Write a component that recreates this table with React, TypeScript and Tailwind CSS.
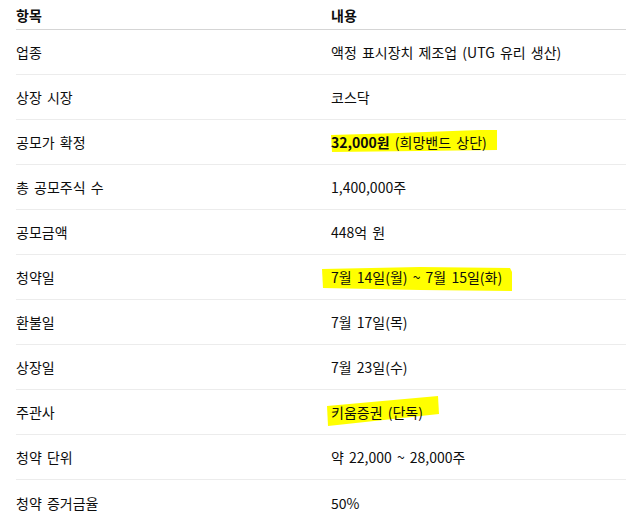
import React from "react";

type Row = { k: string; v: React.ReactNode };

function HL({ children, svgClass, points }: { children: React.ReactNode; svgClass: string; points: string }) {
  return (
    <span className="relative inline-block">
      <svg className={"absolute pointer-events-none " + svgClass} preserveAspectRatio="none">
        <polygon points={points} fill="#ffff00" />
      </svg>
      <span className="relative">{children}</span>
    </span>
  );
}

const rows: Row[] = [
  { k: "업종", v: "액정 표시장치 제조업 (UTG 유리 생산)" },
  { k: "상장 시장", v: "코스닥" },
  {
    k: "공모가 확정",
    v: (
      <HL svgClass="left-[-2px] top-[-4px] w-[170px] h-[26px]" points="2,7 70,5 150,2 168,2 168,22 90,23 3,24">
        <b className="font-bold">32,000원</b> (희망밴드 상단)
      </HL>
    ),
  },
  { k: "총 공모주식 수", v: "1,400,000주" },
  { k: "공모금액", v: "448억 원" },
  {
    k: "청약일",
    v: (
      <HL svgClass="left-[-11px] top-[-3px] w-[195px] h-[30px]" points="2,5 100,3 190,4 192,8 192,27 100,26 3,24">
        7월 14일(월) ~ 7월 15일(화)
      </HL>
    ),
  },
  { k: "환불일", v: "7월 17일(목)" },
  { k: "상장일", v: "7월 23일(수)" },
  {
    k: "주관사",
    v: (
      <HL svgClass="left-[-6px] top-[-8px] w-[117px] h-[34px]" points="2,12 113,2 114,20 3,32">
        키움증권 (단독)
      </HL>
    ),
  },
  { k: "청약 단위", v: "약 22,000 ~ 28,000주" },
  { k: "청약 증거금율", v: "50%" },
];

export default function App() {
  return (
    <div
      className="w-[626px] h-[532px] bg-white pl-4 overflow-hidden text-[14px] leading-5 text-[#0d0d0d] [word-spacing:2px]"
      style={{ fontFamily: '"Noto Sans CJK KR", "Noto Sans", sans-serif' }}
    >
      <div className="flex h-[30px] items-center border-b border-[#d5d5d5] font-bold">
        <div className="w-[315px]">항목</div>
        <div>내용</div>
      </div>
      {rows.map((r, i) => (
        <div
          key={i}
          className={
            i === rows.length - 1
              ? "flex h-[45px] items-center"
              : "flex h-[45px] items-center border-b border-[#ececec]"
          }
        >
          <div className="w-[315px]">{r.k}</div>
          <div>{r.v}</div>
        </div>
      ))}
    </div>
  );
}
